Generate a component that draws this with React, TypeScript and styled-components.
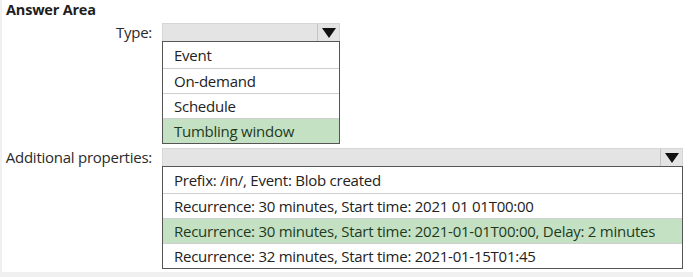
import styled, { createGlobalStyle } from "styled-components";

const GlobalStyle = createGlobalStyle`
  html, body {
    margin: 0;
    padding: 0;
    background: #ffffff;
  }
  body {
    font-family: "Open Sans", "Noto Sans", sans-serif;
    color: #1e1e1e;
  }
`;

interface Field {
  label: string;
  width: number;
  options: string[];
  selected: number;
}

const FIELDS: Field[] = [
  {
    label: "Type:",
    width: 178,
    options: ["Event", "On-demand", "Schedule", "Tumbling window"],
    selected: 3,
  },
  {
    label: "Additional properties:",
    width: 521,
    options: [
      "Prefix: /in/, Event: Blob created",
      "Recurrence: 30 minutes, Start time: 2021 01 01T00:00",
      "Recurrence: 30 minutes, Start time: 2021-01-01T00:00, Delay: 2 minutes",
      "Recurrence: 32 minutes, Start time: 2021-01-15T01:45",
    ],
    selected: 2,
  },
];

const Arrow = () => (
  <svg width="14" height="10" viewBox="0 0 14 10">
    <polygon points="0,0 14,0 7,10" fill="#111" />
  </svg>
);

const App = () => {
  return (
    <>
      <GlobalStyle />
      <Page>
        <Title>Answer Area</Title>
        <Form>
          {FIELDS.map((field) => (
            <Row key={field.label}>
              <Label>{field.label}</Label>
              <Dropdown style={{ width: field.width }}>
                <Bar>
                  <ArrowButton>
                    <Arrow />
                  </ArrowButton>
                </Bar>
                <List>
                  {field.options.map((option, i) => (
                    <Option key={option} $selected={i === field.selected}>
                      {option}
                    </Option>
                  ))}
                </List>
              </Dropdown>
            </Row>
          ))}
        </Form>
      </Page>
    </>
  );
};

export default App;

const Page = styled.div`
  width: 693px;
  height: 277px;
  box-sizing: border-box;
  padding: 1px 0 0 4px;
  border-left: 2px solid #f0f0f0;
  border-bottom: 5px solid #f0f0f0;
`;

const Title = styled.h1`
  margin: 0;
  font-size: 14.5px;
  font-weight: 700;
  line-height: 18px;
  letter-spacing: -0.2px;
`;

const Form = styled.div`
  display: flex;
  flex-direction: column;
  gap: 4px;
  margin-top: 4px;
`;

const Row = styled.div`
  display: flex;
  align-items: flex-start;
  gap: 10px;
`;

const Label = styled.div`
  width: 146px;
  height: 18px;
  display: flex;
  justify-content: flex-end;
  align-items: center;
  white-space: nowrap;
  font-size: 15px;
  letter-spacing: -0.25px;
  color: #2a2a2a;
`;

const Dropdown = styled.div`
  display: flex;
  flex-direction: column;
`;

const Bar = styled.div`
  height: 17px;
  display: flex;
  justify-content: flex-end;
  background: #e4e4e4;
  border: 1px solid #d6d6d6;
  border-bottom: none;
`;

const ArrowButton = styled.div`
  width: 22px;
  display: flex;
  align-items: center;
  justify-content: center;
  border-left: 1px solid #c4c4c4;
  padding-top: 1px;
  box-sizing: border-box;
`;

const List = styled.div`
  display: flex;
  flex-direction: column;
  border: 1px solid #555555;
  box-sizing: border-box;
`;

const Option = styled.div<{ $selected: boolean }>`
  height: 25px;
  line-height: 24px;
  box-sizing: border-box;
  padding-left: 11px;
  font-size: 15px;
  letter-spacing: -0.25px;
  white-space: nowrap;
  color: ${(p) => (p.$selected ? "#1e3a1e" : "#222222")};
  background: ${(p) => (p.$selected ? "#c5e1c3" : "#ffffff")};
  border-top: 1px solid #cfcfcf;
  &:first-child {
    border-top: none;
    height: 26px;
    line-height: 26px;
  }
`;
